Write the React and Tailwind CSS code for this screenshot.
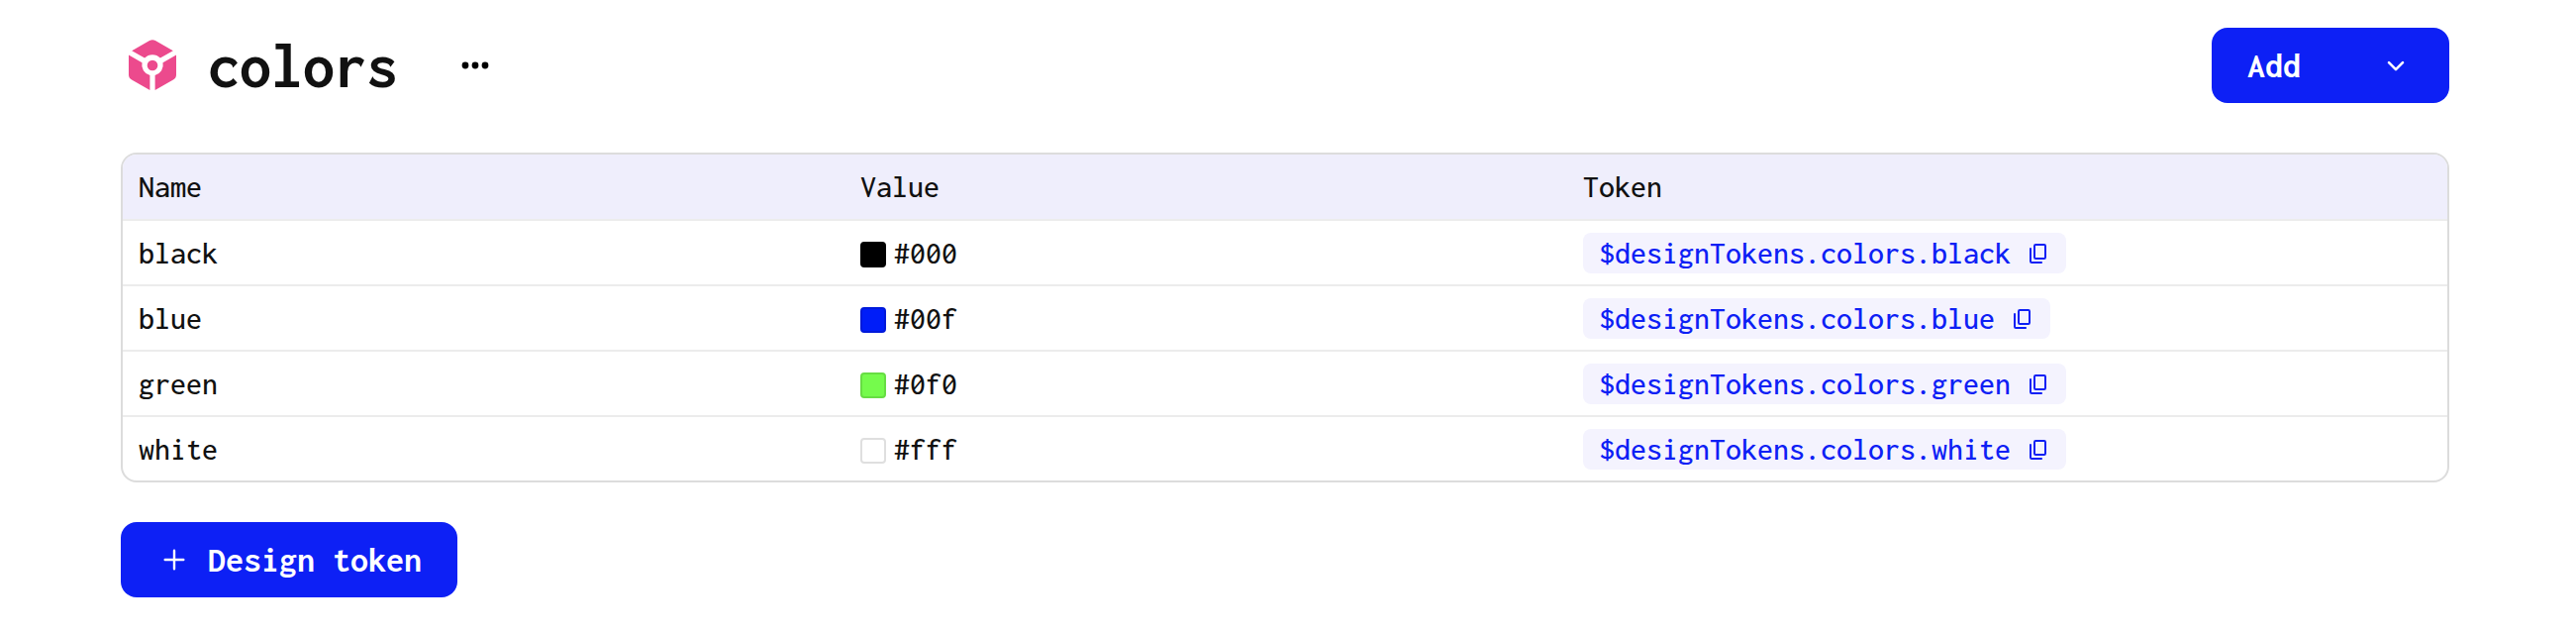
const tokens = [
  { name: "black", value: "#000", swatch: "bg-black border-black" },
  { name: "blue", value: "#00f", swatch: "bg-[#001df8] border-[#0019da]" },
  { name: "green", value: "#0f0", swatch: "bg-[#75fb4c] border-[#67dd43]" },
  { name: "white", value: "#fff", swatch: "bg-white border-[#dfdfdf]" },
];

function CubeIcon() {
  return (
    <svg width="48" height="51" viewBox="0 0 48 51" fill="#ec4a8d" className="mb-px shrink-0">
      <path d="M3.2 11.2 21 1.1Q24 -.6 27 1.1L44.8 11.2 31.9 18.6A10.8 10.8 0 0 0 16.1 18.6Z" />
      <path d="M0 15.5 13.5 23.3A10.8 10.8 0 0 0 21.4 36V51L3 40.5Q0 38.8 0 35.5Z" />
      <path d="M48 15.5 34.5 23.3A10.8 10.8 0 0 1 26.6 36V51L45 40.5Q48 38.8 48 35.5Z" />
      <circle cx="24" cy="26" r="5.3" />
    </svg>
  );
}

function CopyIcon() {
  return (
    <svg width="17" height="20" viewBox="0 0 17 20" fill="none" stroke="#0d20f5" strokeWidth="2">
      <rect x="5" y="1" width="11" height="14" rx="1.2" />
      <path d="M1 4.3V17.8Q1 19 2.2 19H12.8" />
    </svg>
  );
}

export default function App() {
  return (
    <div className="h-[642px] w-[2602px] overflow-hidden bg-white pt-7 pr-32 pl-[122px] font-['Inconsolata','Liberation_Mono',monospace] text-[#111]">
      <header className="flex h-[76px] items-center">
        <div className="ml-2 flex w-20 items-center">
          <CubeIcon />
        </div>
        <h1 className="w-[192px] pt-0.5 text-[64px] leading-[76px] font-bold whitespace-nowrap">colors</h1>
        <svg width="28" height="8" viewBox="0 0 28 8" className="ml-[64px]">
          <circle cx="4" cy="4" r="3.4" />
          <circle cx="14" cy="4" r="3.4" />
          <circle cx="24" cy="4" r="3.4" />
        </svg>
        <button className="ml-auto flex h-[76px] w-60 items-center justify-between rounded-2xl bg-[#0d20f5] pr-[45px] pl-9 text-4xl font-bold text-white">
          <span>Add</span>
          <svg width="18" height="12" viewBox="0 0 18 12" fill="none" stroke="white" strokeWidth="2.6" strokeLinecap="round" strokeLinejoin="round" className="mt-px">
            <path d="M2 2.2 9 9.2 16 2.2" />
          </svg>
        </button>
      </header>

      <div className="mt-[50px] overflow-hidden rounded-2xl border-2 border-[#dcdcdc] text-[32px] leading-[66px] font-medium">
        <div className="grid h-[67px] grid-cols-[729px_730px_1fr] border-b-2 border-[#ececec] bg-[#efeefc]">
          <div className="px-4">Name</div>
          <div className="px-4">Value</div>
          <div className="px-4">Token</div>
        </div>
        {tokens.map((t) => (
          <div key={t.name} className="grid h-[66px] grid-cols-[729px_730px_1fr] border-b-2 border-[#ececec] last:h-16 last:border-b-0">
            <div className="h-16 px-4">{t.name}</div>
            <div className="flex h-16 items-center gap-2 px-4">
              <span className={"mt-1 size-[26px] rounded-[4px] border-2 " + t.swatch} />
              <span className="pt-0.5">{t.value}</span>
            </div>
            <div className="flex h-16 items-center px-4">
              <div className="mt-px flex h-[41px] items-center rounded-lg bg-[#f4f3fe] pr-5 pl-4 leading-[41px] text-[#0d20f5]">
                <span className="mr-[19px]">$designTokens.colors.{t.name}</span>
                <CopyIcon />
              </div>
            </div>
          </div>
        ))}
      </div>

      <button className="mt-10 flex h-[76px] w-[340px] items-center rounded-2xl bg-[#0d20f5] pl-[43px] text-4xl font-bold text-white">
        <svg width="22" height="22" viewBox="0 0 22 22" fill="none" stroke="white" strokeWidth="2.4" strokeLinecap="round">
          <path d="M11 1.7V20.3M1.7 11H20.3" />
        </svg>
        <span className="ml-[23px] whitespace-pre">Design token</span>
      </button>
    </div>
  );
}
